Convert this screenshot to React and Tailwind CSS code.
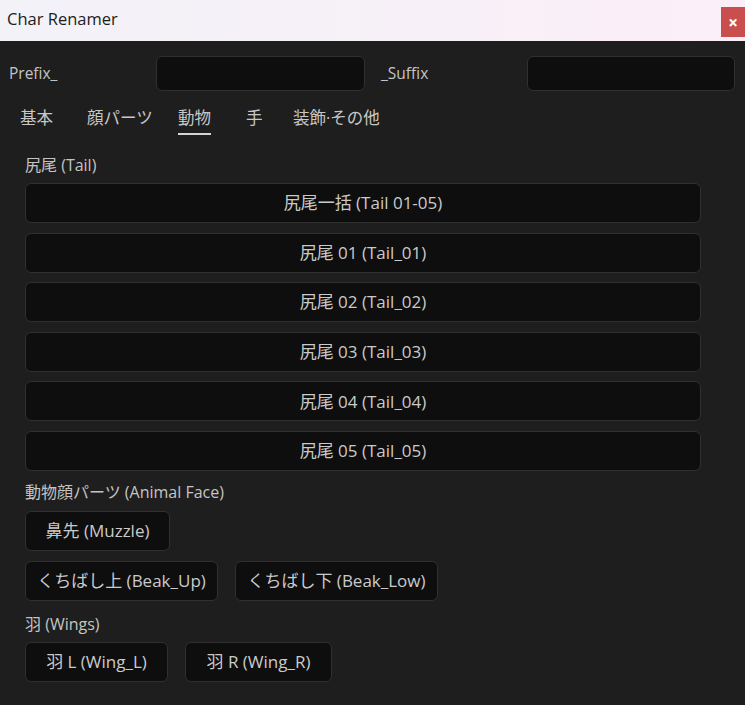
import React, { useState } from 'react';

const FONT = { fontFamily: '"Open Sans", "Noto Sans CJK JP", sans-serif' };

const tabs = [
  { label: '基本', w: 'w-[67px]' },
  { label: '顔パーツ', w: 'w-[91px]' },
  { label: '動物', w: 'w-[68px]' },
  { label: '手', w: 'w-[47px]' },
  { label: '装飾·その他', w: 'w-auto' },
];

const tailButtons = [
  '尻尾一括 (Tail 01-05)',
  '尻尾 01 (Tail_01)',
  '尻尾 02 (Tail_02)',
  '尻尾 03 (Tail_03)',
  '尻尾 04 (Tail_04)',
  '尻尾 05 (Tail_05)',
];

function Btn({ children, className = '' }) {
  return (
    <button className={`h-[40px] rounded-[6px] border-[1.5px] border-[#303030] bg-[#0e0e0e] text-[17px] text-[#cacaca] flex items-center justify-center ${className}`}>
      {children}
    </button>
  );
}

function SectionLabel({ children, className = '' }) {
  return <div className={`h-[20px] leading-[20px] text-[16px] text-[#c4c4c4] ${className}`}>{children}</div>;
}

export default function App() {
  const [tab, setTab] = useState(2);
  const [prefix, setPrefix] = useState('');
  const [suffix, setSuffix] = useState('');

  return (
    <div style={FONT} className="w-[745px] h-[705px] bg-[#1e1e1e] flex flex-col overflow-hidden">
      <div className="h-[41px] flex items-start justify-between bg-gradient-to-r from-[#f2f2f7] to-[#fbeef8]">
        <div className="pl-[7px] pt-[8px] text-[16.5px] leading-[22px] text-[#1c1c1c]">Char Renamer</div>
        <button className="mt-[7px] w-[24px] h-[30px] bg-[#c94f4f] text-white text-[17px] font-bold flex items-center justify-center leading-none">
          ×
        </button>
      </div>

      <div className="px-[9px] pt-[15px] flex flex-col">
        <div className="flex items-center h-[35px]">
          <span className="w-[147px] text-[15.5px] text-[#c4c4c4]">Prefix_</span>
          <input
            value={prefix}
            onChange={e => setPrefix(e.target.value)}
            className="w-[209px] h-[35px] rounded-[6px] border-[1.5px] border-[#303030] bg-[#0e0e0e] text-[#c6c6c6] px-2 outline-none"
          />
          <span className="ml-[16px] w-[146px] text-[15.5px] text-[#c4c4c4]">_Suffix</span>
          <input
            value={suffix}
            onChange={e => setSuffix(e.target.value)}
            className="w-[208px] h-[35px] rounded-[6px] border-[1.5px] border-[#303030] bg-[#0e0e0e] text-[#c6c6c6] px-2 outline-none"
          />
        </div>

        <div className="ml-[11px] mt-[15px] flex items-start">
          {tabs.map((t, i) => (
            <div key={t.label} className={t.w}>
              <button
                onClick={() => setTab(i)}
                className={`text-[16.5px] leading-[24px] text-[#c8c8c8] pb-[3px] border-b-2 ${tab === i ? 'border-[#d4d4d4]' : 'border-transparent'}`}
              >
                {t.label}
              </button>
            </div>
          ))}
        </div>

        <div className="ml-[16px] w-[676px] flex flex-col">
          <SectionLabel className="mt-[20px]">尻尾 (Tail)</SectionLabel>
          <div className="mt-[8px] flex flex-col gap-[9.6px]">
            {tailButtons.map(b => (
              <Btn key={b} className="w-full">{b}</Btn>
            ))}
          </div>

          <SectionLabel className="mt-[11px]">動物顔パーツ (Animal Face)</SectionLabel>
          <div className="mt-[9px] flex flex-col gap-[9.6px]">
            <Btn className="w-[145px]">鼻先 (Muzzle)</Btn>
            <div className="flex gap-[17px]">
              <Btn className="w-[193px]">くちばし上 (Beak_Up)</Btn>
              <Btn className="w-[203px]">くちばし下 (Beak_Low)</Btn>
            </div>
          </div>

          <SectionLabel className="mt-[13px]">羽 (Wings)</SectionLabel>
          <div className="mt-[8px] flex gap-[17px]">
            <Btn className="w-[143px]">羽 L (Wing_L)</Btn>
            <Btn className="w-[147px]">羽 R (Wing_R)</Btn>
          </div>
        </div>
      </div>
    </div>
  );
}
